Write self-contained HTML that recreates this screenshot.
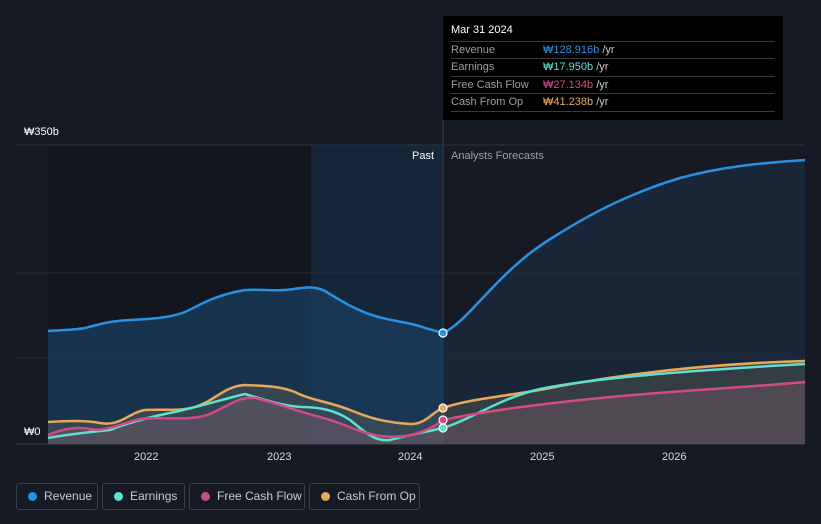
<!DOCTYPE html>
<html><head><style>
body{margin:0;background:#151a24;width:821px;height:524px;overflow:hidden;font-family:"Liberation Sans",sans-serif;position:relative}
.t{position:absolute;font-size:11px;color:#fff}
.leg{position:absolute;top:483px;height:27px;border:1px solid #3a404b;border-radius:3px;box-sizing:border-box;color:#c8ccd3;font-size:12px;line-height:25px;padding-left:27px}
.leg i{position:absolute;left:11px;top:8px;width:9px;height:9px;border-radius:50%}
.tip{position:absolute;left:443px;top:16px;width:340px;height:104px;background:#000}
.row{position:absolute;left:8px;width:324px;border-top:1px solid #3a3a3a;height:17px;font-size:11px;color:#9aa0a8;line-height:17px}
.row span{position:absolute;left:92px}
</style></head><body>
<svg width="821" height="524" style="position:absolute;left:0;top:0">
<defs>
<linearGradient id="pg" x1="0" y1="0" x2="0" y2="1"><stop offset="0" stop-color="#1a2f4a"/><stop offset="1" stop-color="#17324f"/></linearGradient>
</defs>
<rect x="48" y="145" width="263" height="299" fill="#11161f"/>
<rect x="311" y="145" width="132" height="299" fill="#152638"/>
<line x1="16" y1="145" x2="805" y2="145" stroke="#2c3340"/>
<line x1="16" y1="273" x2="805" y2="273" stroke="#262d39"/>
<line x1="16" y1="358" x2="805" y2="358" stroke="#262d39"/>
<line x1="16" y1="444" x2="805" y2="444" stroke="#3a404b"/>
<line x1="443" y1="120" x2="443" y2="444" stroke="#3a404b"/>
<path d="M48,331 C60,330 75,330 85,328 C100,324 110,321 130,320 C150,319 170,318 185,312 C200,305 215,295 245,290 C260,289 270,291 285,290 C300,289 310,284 325,291 C340,300 355,310 375,316 C395,322 410,322 425,328 L443,333 L443,444 L48,444Z" fill="#1b3d5e" opacity="0.75"/>
<path d="M443,333 C460,325 475,305 500,280 C520,260 535,248 560,233 C600,208 640,190 680,178 C720,167 760,163 805,160 L805,444 L443,444Z" fill="#1a2c42" opacity="0.7"/>
<path d="M48,422 C65,421 85,420 100,423 C120,427 130,412 145,410 C165,409 185,412 200,405 C215,400 225,386 245,385 C265,386 280,386 295,392 C310,400 330,402 350,410 C365,416 380,422 410,424 C425,425 432,412 443,408 C470,398 520,395 560,386 C620,375 700,364 805,361 L805,444 L48,444Z" fill="#6b6a5a" opacity="0.35"/>
<path d="M48,435 C60,430 75,426 90,429 C105,432 120,424 140,419 C160,416 190,422 210,414 C230,405 240,396 255,398 C280,404 300,412 320,417 C340,422 360,433 380,436 C400,438 420,437 443,420 C480,412 540,404 600,398 C680,390 740,388 805,382 L805,444 L48,444Z" fill="#8a6070" opacity="0.35"/>
<path d="M48,331 C60,330 75,330 85,328 C100,324 110,321 130,320 C150,319 170,318 185,312 C200,305 215,295 245,290 C260,289 270,291 285,290 C300,289 310,284 325,291 C340,300 355,310 375,316 C395,322 410,322 425,328 L443,333 C460,325 475,305 500,280 C520,260 535,248 560,233 C600,208 640,190 680,178 C720,167 760,163 805,160" fill="none" stroke="#2a91e0" stroke-width="2.5"/>
<path d="M48,422 C65,421 85,420 100,423 C120,427 130,412 145,410 C165,409 185,412 200,405 C215,400 225,386 245,385 C265,386 280,386 295,392 C310,400 330,402 350,410 C365,416 380,422 410,424 C425,425 432,412 443,408 C470,398 520,395 560,386 C620,375 700,364 805,361" fill="none" stroke="#e8a85a" stroke-width="2.5"/>
<path d="M48,438 C70,434 90,432 110,430 C130,422 150,417 170,413 C195,408 220,400 245,394 C265,400 280,405 300,407 C320,407 335,410 350,420 C365,432 375,442 390,440 C405,436 425,432 443,428 C470,420 500,398 540,389 C600,377 700,370 805,364" fill="none" stroke="#5ee0d0" stroke-width="2.5"/>
<path d="M48,435 C60,430 75,426 90,429 C105,432 120,424 140,419 C160,416 190,422 210,414 C230,405 240,396 255,398 C280,404 300,412 320,417 C340,422 360,433 380,436 C400,438 420,437 443,420 C480,412 540,404 600,398 C680,390 740,388 805,382" fill="none" stroke="#d04a88" stroke-width="2.5"/>
<circle cx="443" cy="333" r="4" fill="#2a91e0" stroke="#fff" stroke-width="1.2"/>
<circle cx="443" cy="408" r="4" fill="#e8a85a" stroke="#fff" stroke-width="1.2"/>
<circle cx="443" cy="420" r="4" fill="#d04a88" stroke="#fff" stroke-width="1.2"/>
<circle cx="443" cy="428" r="4" fill="#5ee0d0" stroke="#fff" stroke-width="1.2"/>
</svg>
<div class="t" style="left:24px;top:126px">₩350b</div>
<div class="t" style="left:24px;top:426px">₩0</div>
<div class="t" style="left:412px;top:150px;color:#fff">Past</div>
<div class="t" style="left:451px;top:150px;color:#9aa0a8">Analysts Forecasts</div>
<div class="t" style="left:134px;top:451px;color:#d8dbe0">2022</div>
<div class="t" style="left:267px;top:451px;color:#d8dbe0">2023</div>
<div class="t" style="left:398px;top:451px;color:#d8dbe0">2024</div>
<div class="t" style="left:530px;top:451px;color:#d8dbe0">2025</div>
<div class="t" style="left:662px;top:451px;color:#d8dbe0">2026</div>
<div class="tip">
<div class="t" style="left:8px;top:8px">Mar 31 2024</div>
<div class="row" style="top:25px">Revenue<span style="color:#2a91e0">₩128.916b <b style="font-weight:normal;color:#ccc">/yr</b></span></div>
<div class="row" style="top:42px">Earnings<span style="color:#5ee0d0">₩17.950b <b style="font-weight:normal;color:#ccc">/yr</b></span></div>
<div class="row" style="top:60px">Free Cash Flow<span style="color:#d04a88">₩27.134b <b style="font-weight:normal;color:#ccc">/yr</b></span></div>
<div class="row" style="top:77px">Cash From Op<span style="color:#e8a85a">₩41.238b <b style="font-weight:normal;color:#ccc">/yr</b></span></div>
<div class="row" style="top:95px;height:0"></div>
</div>
<div class="leg" style="left:16px;width:82px"><i style="background:#2a91e0"></i>Revenue</div>
<div class="leg" style="left:102px;width:83px"><i style="background:#5ee0d0"></i>Earnings</div>
<div class="leg" style="left:189px;width:116px"><i style="background:#d04a88"></i>Free Cash Flow</div>
<div class="leg" style="left:309px;width:111px"><i style="background:#e8a85a"></i>Cash From Op</div>
</body></html>
